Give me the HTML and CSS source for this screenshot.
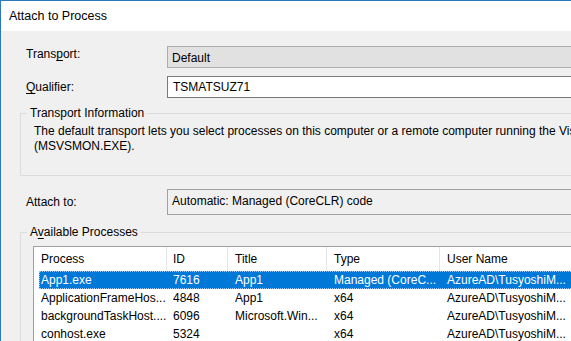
FILE: index.html
```html
<!DOCTYPE html>
<html lang="en">
  <head>
    <meta charset="UTF-8" />
    <meta name="viewport" content="width=device-width, initial-scale=1.0" />
    <title>Attach to Process</title>
    <link rel="stylesheet" href="styles.css">
  </head>
  <body>
    <div class="window">
      <div class="titlebar">Attach to Process</div>

      <div class="dialog">
        <!-- Transport / Qualifier -->
        <div class="field-row transport-row">
          <label class="field-label">Trans<u>p</u>ort:</label>
          <div class="combo">Default</div>
        </div>
        <div class="field-row qualifier-row">
          <label class="field-label"><u>Q</u>ualifier:</label>
          <div class="textbox">TSMATSUZ71</div>
        </div>

        <!-- Transport Information -->
        <div class="group info-group">
          <span class="legend">Transport Information</span>
          <p class="info-text">
            The default transport lets you select processes on this computer or a remote computer running the Visual Studio Remote Debugging Monitor<br>
            (MSVSMON.EXE).
          </p>
        </div>

        <div class="field-row attach-row">
          <label class="field-label">Attach to:</label>
          <div class="readonly-box">Automatic: Managed (CoreCLR) code</div>
        </div>

        <!-- Available Processes -->
        <div class="group processes-group">
          <span class="legend">A<u>v</u>ailable Processes</span>
          <div class="listview">
            <div class="lv-row lv-header">
              <span class="col col-process">Process</span>
              <span class="col col-id">ID</span>
              <span class="col col-title">Title</span>
              <span class="col col-type">Type</span>
              <span class="col col-user">User Name</span>
            </div>
            <div class="lv-row selected">
              <span class="col col-process">App1.exe</span>
              <span class="col col-id">7616</span>
              <span class="col col-title">App1</span>
              <span class="col col-type">Managed (CoreC...</span>
              <span class="col col-user">AzureAD\TusyoshiM...</span>
            </div>
            <div class="lv-row">
              <span class="col col-process">ApplicationFrameHos...</span>
              <span class="col col-id">4848</span>
              <span class="col col-title">App1</span>
              <span class="col col-type">x64</span>
              <span class="col col-user">AzureAD\TusyoshiM...</span>
            </div>
            <div class="lv-row">
              <span class="col col-process">backgroundTaskHost....</span>
              <span class="col col-id">6096</span>
              <span class="col col-title">Microsoft.Win...</span>
              <span class="col col-type">x64</span>
              <span class="col col-user">AzureAD\TusyoshiM...</span>
            </div>
            <div class="lv-row">
              <span class="col col-process">conhost.exe</span>
              <span class="col col-id">5324</span>
              <span class="col col-title"></span>
              <span class="col col-type">x64</span>
              <span class="col col-user">AzureAD\TusyoshiM...</span>
            </div>
          </div>
        </div>
      </div>
    </div>
  </body>
</html>
```

FILE: styles.css
```css
html,
body {
  margin: 0;
  padding: 0;
  overflow: hidden;
  height: 341px;
}

body {
  font-family: "Liberation Sans", Arial, sans-serif;
  font-size: 12px;
  color: #000;
  background: #f0f0f0;
}

u {
  text-decoration: underline;
  text-underline-offset: 2px;
}

.window {
  width: 760px;
  height: 341px;
  border-top: 1px solid #2b79b9;
  border-left: 1px solid #2b79b9;
  background: #f0f0f0;
}

.titlebar {
  height: 30px;
  line-height: 30px;
  padding-left: 8px;
  font-size: 12.5px;
  background: #fff;
}

.dialog {
  padding: 15px 0 0 19px;
}

.field-row {
  display: flex;
  align-items: center;
}

.field-label {
  box-sizing: border-box;
  width: 147px;
  padding-left: 6px;
  flex-shrink: 0;
}

.transport-row .field-label {
  align-self: flex-start;
  padding-top: 1px;
}

.combo,
.textbox,
.readonly-box {
  flex: 1;
  box-sizing: border-box;
  padding-left: 4px;
}

.combo {
  height: 22px;
  line-height: 22px;
  background: #e1e1e1;
  border-top: 1px solid #adadad;
  border-bottom: 1px solid #adadad;
  border-left: 1px solid #adadad;
}

.qualifier-row {
  margin-top: 8px;
}

.textbox {
  height: 22px;
  line-height: 20px;
  padding-left: 5px;
  background: #fff;
  border: 1px solid #7a7a7a;
}

.group {
  border: 1px solid #dcdcdc;
  border-right: none;
}

.legend {
  display: block;
  width: max-content;
  margin: -8px 0 0 6px;
  padding: 0 3px 0 3px;
  line-height: 15px;
  background: #f0f0f0;
}

.info-group {
  margin-top: 15px;
  height: 61px;
}

.info-text {
  margin: 3px 0 0 13px;
  line-height: 15px;
  white-space: nowrap;
}

.attach-row {
  margin-top: 13px;
}

.readonly-box {
  height: 26px;
  line-height: 22px;
  padding-left: 4px;
  border: 1px solid #a0a0a0;
  border-right: none;
}

.processes-group {
  margin-top: 17px;
  height: 140px;
}

.listview {
  margin: 6px 0 0 12px;
  background: #fff;
  border-top: 1px solid #a0a0a0;
  border-left: 1px solid #a0a0a0;
}

.lv-row {
  display: flex;
  height: 18px;
  line-height: 18px;
  margin-left: 5px;
  white-space: nowrap;
}

.lv-header {
  height: 24px;
  line-height: 24px;
}

.lv-header .col {
  border-right: 1px solid #e5e5e5;
}

.col {
  box-sizing: border-box;
  padding-left: 7px;
  overflow: hidden;
}

.col-process {
  width: 128px;
  padding-left: 2px;
}

.col-id {
  width: 61px;
  padding-left: 6px;
}

.col-title {
  width: 99px;
}

.col-type {
  width: 113px;
}

.col-user {
  width: 160px;
}

.selected {
  background: #0078d7;
  color: #fff;
  outline: 1px dotted #9ccaf0;
  outline-offset: -1px;
}
```
